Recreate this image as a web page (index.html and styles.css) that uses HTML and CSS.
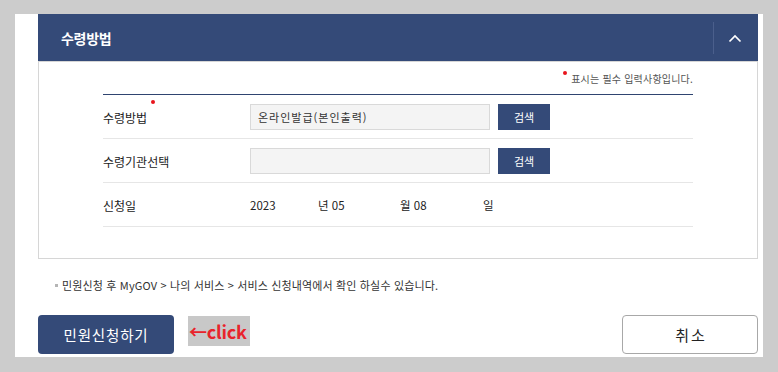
FILE: index.html
```html
<!DOCTYPE html>
<html lang="ko">
<head>
<meta charset="utf-8">
<link rel="stylesheet" href="styles.css">
</head>
<body>
<div class="page">
  <section class="panel">
    <div class="panel-head">
      <h2 class="panel-title">수령방법</h2>
      <button class="toggle" type="button" aria-label="접기">
        <svg width="14" height="9" viewBox="0 0 14 9"><path d="M1.5 7.5 L7 2 L12.5 7.5" fill="none" stroke="#fff" stroke-width="1.7"/></svg>
      </button>
    </div>
    <div class="panel-body">
      <p class="req-note"><span class="dot"></span>표시는 필수 입력사항입니다.</p>
      <div class="form">
        <div class="row">
          <div class="label">수령방법<span class="dot label-dot"></span></div>
          <div class="field">
            <div class="input">온라인발급(본인출력)</div>
            <button class="btn-search" type="button">검색</button>
          </div>
        </div>
        <div class="row">
          <div class="label">수령기관선택</div>
          <div class="field">
            <div class="input"></div>
            <button class="btn-search" type="button">검색</button>
          </div>
        </div>
        <div class="row">
          <div class="label">신청일</div>
          <div class="field date">
            <span class="d-year">2023</span>
            <span class="d-month">년 05</span>
            <span class="d-day">월 08</span>
            <span class="d-end">일</span>
          </div>
        </div>
      </div>
    </div>
  </section>
  <p class="info"><span class="bullet"></span>민원신청 후 MyGOV &gt; 나의 서비스 &gt; 서비스 신청내역에서 확인 하실수 있습니다.</p>
  <div class="actions">
    <div class="left-actions">
      <button class="btn-primary" type="button">민원신청하기</button>
      <span class="click-tag">←click</span>
    </div>
    <button class="btn-cancel" type="button">취소</button>
  </div>
</div>
</body>
</html>
```

FILE: styles.css
```css
* { box-sizing: border-box; }
html, body { margin: 0; padding: 0; }
body {
  background: #cccccc;
  font-family: "Noto Sans CJK KR", "Noto Sans", sans-serif;
  color: #222;
  width: 778px;
  height: 372px;
  overflow: hidden;
}
.page {
  background: #fff;
  margin: 14px 15px 0 15px;
  width: 748px;
  height: 343px;
  padding: 0 5px 3px 23px;
}
.panel { width: 720px; }
.panel-head {
  height: 47px;
  background: #344a78;
  display: flex;
  align-items: center;
}
.panel-title {
  flex: 1;
  margin: 0;
  padding-left: 23px;
  color: #fff;
  font-size: 14px;
  font-weight: 700;
  letter-spacing: -0.3px;
}
.toggle {
  width: 45px;
  height: 32px;
  margin-top: 1px;
  border: 0;
  border-left: 1px solid #4b5f8c;
  background: transparent;
  padding: 0;
  display: flex;
  align-items: center;
  justify-content: center;
}
.toggle svg { display: block; margin-right: 3px; margin-top: 1px; }
.panel-body {
  border: 1px solid #d6d6d6;
  padding: 0 64px 31px 64px;
}
.req-note {
  margin: 0;
  height: 32px;
  display: flex;
  justify-content: flex-end;
  align-items: center;
  font-size: 10px;
  color: #555;
  letter-spacing: 0.2px;
  padding-top: 1px;
}
.dot {
  display: inline-block;
  width: 4px;
  height: 4px;
  border-radius: 50%;
  background: #e8141c;
  margin-right: 4px;
  align-self: flex-start;
  margin-top: 8px;
}
.form { border-top: 1px solid #2f4470; }
.row {
  height: 44px;
  border-bottom: 1px solid #e6e6e6;
  display: flex;
  align-items: center;
}
.label {
  width: 147px;
  font-size: 12px;
  color: #222;
  position: relative;
  padding-top: 2px;
}
.label-dot {
  position: absolute;
  left: 48px;
  top: -7px;
  margin: 0;
}
.field { display: flex; align-items: center; }
.input {
  width: 240px;
  height: 26px;
  background: #f4f4f4;
  border: 1px solid #d9d9d9;
  font-size: 11px;
  color: #333;
  padding: 0 0 0 7px;
  line-height: 24px;
  letter-spacing: 1px;
}
.btn-search {
  margin-left: 8px;
  width: 52px;
  height: 26px;
  border: 0;
  background: #344a78;
  color: #fff;
  font-family: inherit;
  font-size: 11px;
  padding: 0;
}
.date { font-size: 11.5px; color: #222; padding-top: 1px; }
.date span { display: inline-block; }
.d-year { width: 68px; }
.d-month { width: 82px; }
.d-day { width: 83px; }
.info {
  margin: 18px 0 0 17px;
  height: 16px;
  display: flex;
  align-items: center;
  font-size: 11px;
  color: #333;
  letter-spacing: 0.15px;
}
.bullet {
  width: 3px;
  height: 3px;
  background: #b5b5b5;
  margin-right: 4px;
}
.actions {
  margin-top: 22px;
  width: 720px;
  display: flex;
  justify-content: space-between;
  align-items: flex-start;
}
.left-actions { display: flex; align-items: flex-start; }
.btn-primary {
  width: 136px;
  height: 39px;
  border: 0;
  border-radius: 4px;
  background: #344a78;
  color: #fff;
  font-family: inherit;
  font-size: 14.5px;
  letter-spacing: 0.8px;
  padding: 0;
}
.click-tag {
  margin-left: 14px;
  margin-top: 1px;
  width: 62px;
  height: 30px;
  background: #c8c8c8;
  color: #e8232b;
  font-weight: 700;
  font-size: 18px;
  line-height: 30px;
  padding-left: 1px;
  letter-spacing: -0.2px;
  white-space: nowrap;
  overflow: hidden;
}
.btn-cancel {
  width: 136px;
  height: 39px;
  border: 1px solid #a8a8a8;
  border-radius: 4px;
  background: #fff;
  color: #222;
  font-family: inherit;
  font-size: 15px;
  letter-spacing: 2px;
  padding: 0 0 0 2px;
}
```
